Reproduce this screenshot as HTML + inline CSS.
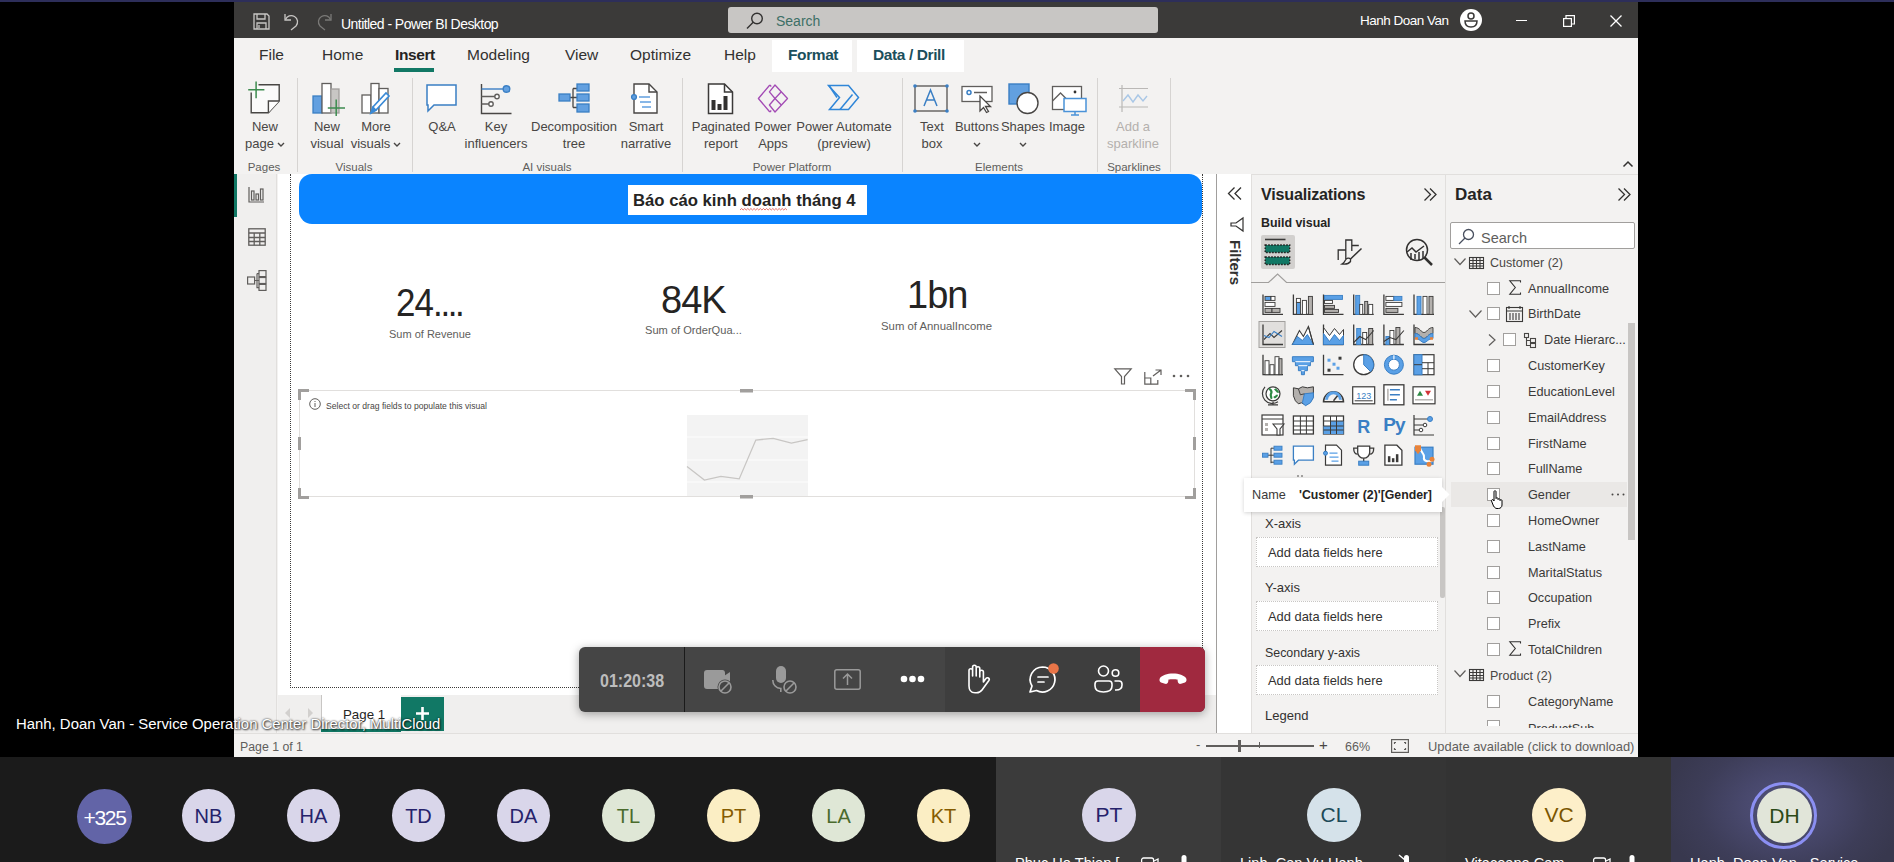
<!DOCTYPE html>
<html><head><meta charset="utf-8">
<style>
*{margin:0;padding:0;box-sizing:border-box}
html,body{width:1894px;height:862px;overflow:hidden;background:#000;font-family:"Liberation Sans",sans-serif}
body{position:relative}
.a{position:absolute}
.t{position:absolute;white-space:nowrap;line-height:1}
svg{position:absolute;overflow:visible}
.tab{position:absolute;top:47px;font-size:15.5px;color:#323130;line-height:1;white-space:nowrap}
.rl{position:absolute;font-size:13px;color:#484644;text-align:center;line-height:17px;white-space:nowrap;top:119px}
.gl{position:absolute;top:162px;font-size:11.5px;color:#605e5c;white-space:nowrap;line-height:1}
.sep{position:absolute;top:78px;width:1px;height:94px;background:#d6d4d2}
</style></head><body>
<!-- top strip -->
<div class="a" style="left:0;top:0;width:1894px;height:2px;background:#2d2e5a"></div>
<!-- window bg -->
<div class="a" style="left:234px;top:2px;width:1404px;height:755px;background:#f3f2f1"></div>
<!-- title bar -->
<div class="a" style="left:234px;top:2px;width:1404px;height:36px;background:#3b3a39"></div>
<div class="a" style="left:728px;top:7px;width:430px;height:26px;background:#c8c6c4;border-radius:3px"></div>
<div class="t" style="left:341px;top:16.5px;font-size:14px;color:#fff;letter-spacing:-0.55px">Untitled - Power BI Desktop</div>
<div class="t" style="left:776px;top:13.5px;font-size:14px;color:#3d6f66">Search</div>
<div class="t" style="left:1360px;top:14px;font-size:13.5px;color:#fff;letter-spacing:-0.5px">Hanh Doan Van</div>

<!-- title icons -->
<svg style="left:253px;top:13px" width="17" height="17" viewBox="0 0 17 17" fill="none" stroke="#c8c6c4" stroke-width="1.3"><path d="M1 1h13l2 2v13H1z"/><path d="M4 1v5h8V1"/><path d="M4 16v-6h9v6"/><path d="M6 12v3"/></svg>
<svg style="left:284px;top:12px" width="16" height="18" viewBox="0 0 16 18" fill="none" stroke="#c8c6c4" stroke-width="1.3"><path d="M1 2v6h6"/><path d="M1.5 7.5C3 4 7 2.5 10.5 4.5c3.5 2 4 6.5 1.5 9.5L7 18"/></svg>
<svg style="left:316px;top:12px" width="16" height="18" viewBox="0 0 16 18" fill="none" stroke="#7a7977" stroke-width="1.3"><path d="M15 2v6H9"/><path d="M14.5 7.5C13 4 9 2.5 5.5 4.5c-3.5 2-4 6.5-1.5 9.5L9 18"/></svg>
<svg style="left:746px;top:12px" width="18" height="17" viewBox="0 0 18 17" fill="none" stroke="#323130" stroke-width="1.4"><circle cx="11" cy="6.5" r="5.3"/><path d="M7.2 10.3L1 16.5"/></svg>
<svg style="left:1460px;top:9px" width="22" height="22" viewBox="0 0 22 22"><circle cx="11" cy="11" r="11" fill="#fff"/><circle cx="11" cy="7" r="3" fill="none" stroke="#3b3a39" stroke-width="1.5"/><path d="M5 12h12c0 4-2.5 6-6 6s-6-2-6-6z" fill="none" stroke="#3b3a39" stroke-width="1.5"/></svg>
<div class="a" style="left:1516px;top:20px;width:11px;height:1.3px;background:#fff"></div>
<svg style="left:1563px;top:15px" width="12" height="12" viewBox="0 0 12 12" fill="none" stroke="#fff" stroke-width="1.2"><rect x="0.6" y="3.6" width="7.8" height="7.8"/><path d="M3 3.6V0.6h8.4V9H8.4"/></svg>
<svg style="left:1610px;top:15px" width="12" height="12" viewBox="0 0 12 12" fill="none" stroke="#fff" stroke-width="1.3"><path d="M0.5 0.5l11 11M11.5 0.5l-11 11"/></svg>
<!-- tabs -->
<div class="tab" style="left:259px">File</div>
<div class="tab" style="left:322px">Home</div>
<div class="tab" style="left:395px;font-weight:bold;color:#252423;letter-spacing:-0.4px">Insert</div>
<div class="a" style="left:394px;top:68px;width:40px;height:4px;background:#117865"></div>
<div class="tab" style="left:467px">Modeling</div>
<div class="tab" style="left:565px">View</div>
<div class="tab" style="left:630px">Optimize</div>
<div class="tab" style="left:724px">Help</div>
<div class="a" style="left:772px;top:40px;width:80px;height:32px;background:#fff"></div>
<div class="a" style="left:857px;top:40px;width:107px;height:32px;background:#fff"></div>
<div class="tab" style="left:788px;font-weight:bold;color:#1b4f5c;letter-spacing:-0.4px">Format</div>
<div class="tab" style="left:873px;font-weight:bold;color:#1b4f5c;letter-spacing:-0.4px">Data / Drill</div>

<!-- ribbon labels -->
<div class="rl" style="left:235px;width:60px;top:118px">New<br>page<svg style="position:relative;display:inline-block;margin-left:3px;vertical-align:1px" width="8" height="5" viewBox="0 0 8 5" fill="none" stroke="#484644" stroke-width="1.4"><path d="M1 1l3 3 3-3"/></svg></div>
<div class="rl" style="left:302px;width:50px;top:118px">New<br>visual</div>
<div class="rl" style="left:348px;width:56px;top:118px">More<br>visuals<svg style="position:relative;display:inline-block;margin-left:3px;vertical-align:1px" width="8" height="5" viewBox="0 0 8 5" fill="none" stroke="#484644" stroke-width="1.4"><path d="M1 1l3 3 3-3"/></svg></div>
<div class="rl" style="left:417px;width:50px;top:118px">Q&amp;A</div>
<div class="rl" style="left:461px;width:70px;top:118px">Key<br>influencers</div>
<div class="rl" style="left:529px;width:90px;top:118px">Decomposition<br>tree</div>
<div class="rl" style="left:616px;width:60px;top:118px">Smart<br>narrative</div>
<div class="rl" style="left:688px;width:66px;top:118px">Paginated<br>report</div>
<div class="rl" style="left:748px;width:50px;top:118px">Power<br>Apps</div>
<div class="rl" style="left:794px;width:100px;top:118px">Power Automate<br>(preview)</div>
<div class="rl" style="left:907px;width:50px;top:118px">Text<br>box</div>
<div class="rl" style="left:952px;width:50px;top:118px">Buttons<br><svg style="position:relative;display:inline-block;vertical-align:1px" width="8" height="5" viewBox="0 0 8 5" fill="none" stroke="#484644" stroke-width="1.4"><path d="M1 1l3 3 3-3"/></svg></div>
<div class="rl" style="left:998px;width:50px;top:118px">Shapes<br><svg style="position:relative;display:inline-block;vertical-align:1px" width="8" height="5" viewBox="0 0 8 5" fill="none" stroke="#484644" stroke-width="1.4"><path d="M1 1l3 3 3-3"/></svg></div>
<div class="rl" style="left:1042px;width:50px;top:118px">Image</div>
<div class="rl" style="left:1103px;width:60px;top:118px;color:#b3b0ad">Add a<br>sparkline</div>
<div class="gl" style="left:264px;transform:translateX(-50%)">Pages</div>
<div class="gl" style="left:354px;transform:translateX(-50%)">Visuals</div>
<div class="gl" style="left:547px;transform:translateX(-50%)">AI visuals</div>
<div class="gl" style="left:792px;transform:translateX(-50%)">Power Platform</div>
<div class="gl" style="left:999px;transform:translateX(-50%)">Elements</div>
<div class="gl" style="left:1134px;transform:translateX(-50%)">Sparklines</div>
<div class="sep" style="left:297px"></div>
<div class="sep" style="left:412px"></div>
<div class="sep" style="left:682px"></div>
<div class="sep" style="left:902px"></div>
<div class="sep" style="left:1097px"></div>
<div class="sep" style="left:1170px"></div>
<svg style="left:1622px;top:160px" width="12" height="8" viewBox="0 0 12 8" fill="none" stroke="#323130" stroke-width="1.5"><path d="M1.5 6.5L6 2l4.5 4.5"/></svg>
<!-- ribbon icons -->
<svg style="left:248px;top:81px" width="34" height="36" viewBox="0 0 34 36" fill="none" stroke-width="1.4"><path d="M10.5 3.8H31.2V20L20.4 31.8H3.2V11.5" fill="#fafafa" stroke="#484644"/><path d="M31.2 20H20.4v11.8" stroke="#484644" fill="#fff"/><path d="M8.1 0.4v16.8M0.2 8.7h16.2" stroke="#3d8b4f" stroke-width="1.5"/></svg>
<svg style="left:312px;top:82px" width="36" height="36" viewBox="0 0 36 36" fill="none" stroke-width="1.3"><rect x="1" y="14" width="9" height="17" fill="#62a0e0" stroke="#3a7fc4"/><rect x="10" y="1.5" width="9" height="29.5" fill="#fff" stroke="#605e5c"/><rect x="19" y="7" width="8" height="24" fill="#c8c6c4" stroke="#a19f9d"/><path d="M24.2 17.6v16.4M15.8 26.1h17.2" stroke="#3d8b4f" stroke-width="1.5"/></svg>
<svg style="left:361px;top:82px" width="34" height="34" viewBox="0 0 34 34" fill="none" stroke-width="1.3"><rect x="1" y="13" width="9" height="18" fill="#fff" stroke="#605e5c"/><rect x="10" y="1.5" width="8" height="29.5" fill="#fff" stroke="#605e5c"/><rect x="18" y="6.5" width="9" height="24.5" fill="#fff" stroke="#605e5c"/><path d="M10 31l2-6L25 11l3 3-13 14z" fill="#fff" stroke="#3a8ad6" stroke-width="1.6"/><path d="M10 31l2-6 3 3z" fill="#3a8ad6" stroke="#3a8ad6"/></svg>
<svg style="left:426px;top:84px" width="32" height="30" viewBox="0 0 32 30" fill="none" stroke="#3a7fc4" stroke-width="1.5"><path d="M1 1h29v20H8l-6 6V21H1z" fill="#fff"/></svg>
<svg style="left:480px;top:83px" width="32" height="32" viewBox="0 0 32 32" fill="none" stroke-width="1.4"><path d="M1.5 1v29.5h30" stroke="#484644"/><path d="M1.5 6h24" stroke="#3a7fc4"/><circle cx="26.5" cy="6" r="3.3" fill="#62a0e0" stroke="#3a7fc4"/><path d="M1.5 13.5h14M1.5 21h10" stroke="#605e5c"/><circle cx="17" cy="13.5" r="2.2" fill="#fff" stroke="#605e5c"/><circle cx="11" cy="21" r="2.2" fill="#fff" stroke="#605e5c"/></svg>
<svg style="left:558px;top:83px" width="32" height="32" viewBox="0 0 32 32" fill="none" stroke-width="1.3"><path d="M12 14.5h3M15 5.5v19M15 5.5h4M15 14.5h4M15 24.5h4" stroke="#484644"/><rect x="1" y="11" width="11" height="7" fill="#62a0e0" stroke="#3a7fc4"/><rect x="19" y="1" width="12" height="7" fill="#62a0e0" stroke="#3a7fc4"/><rect x="19" y="11" width="12" height="7" fill="#62a0e0" stroke="#3a7fc4"/><rect x="19" y="21" width="12" height="8" fill="#62a0e0" stroke="#3a7fc4"/></svg>
<svg style="left:631px;top:83px" width="28" height="32" viewBox="0 0 28 32" fill="none" stroke-width="1.4"><path d="M3 1h15l8 8v21H3z" fill="#fff" stroke="#484644"/><path d="M18 1v8h8" stroke="#484644"/><circle cx="3" cy="14" r="2.4" fill="#62a0e0" stroke="#3a7fc4"/><path d="M8 14h11M9 19h11M11 24h9" stroke="#62a0e0" stroke-width="1.6"/></svg>
<svg style="left:707px;top:83px" width="28" height="32" viewBox="0 0 28 32" fill="none" stroke-width="1.5"><path d="M1.5 1h16l8 8v21.5h-24z" fill="#fff" stroke="#3b3a39"/><path d="M17.5 1v8h8" stroke="#3b3a39"/><rect x="4.5" y="17" width="4" height="10" fill="#323130" stroke="none"/><rect x="10.5" y="21" width="4" height="6" fill="#323130" stroke="none"/><rect x="16.5" y="13" width="4" height="14" fill="#323130" stroke="none"/></svg>
<svg style="left:756px;top:84px" width="34" height="30" viewBox="0 0 34 30" fill="none" stroke="#a34bb5" stroke-width="1.3" stroke-linejoin="round"><path d="M13.8 1L2.4 14.5 13.8 28"/><path d="M19 1l12.5 13.5L19 28l-5.6-7 5.6-6.5-5.6-6.7z"/><path d="M19 14.5l6.3-6.7M19 14.5l6.3 6.5"/><path d="M13.8 1l1.5 1.5M13.8 28l1.5-1.5"/></svg>
<svg style="left:827px;top:84px" width="34" height="28" viewBox="0 0 34 28" fill="none" stroke="#2f86d8" stroke-width="1.5"><path d="M1.5 1.5h20l10 12-10 12h-19l10-12z"/><path d="M13 25.5l12.5-15"/><path d="M2 1.5l8 12"/></svg>
<svg style="left:913px;top:84px" width="36" height="30" viewBox="0 0 36 30" fill="none"><rect x="2" y="2" width="32" height="25" stroke="#605e5c" stroke-width="1.4"/><circle cx="2" cy="2" r="1.8" fill="#3a7fc4"/><circle cx="34" cy="2" r="1.8" fill="#3a7fc4"/><circle cx="2" cy="27" r="1.8" fill="#3a7fc4"/><circle cx="34" cy="27" r="1.8" fill="#3a7fc4"/><path d="M11 22L17.5 6 24 22M13.5 16h8" stroke="#3a7fc4" stroke-width="1.5"/></svg>
<svg style="left:961px;top:85px" width="32" height="28" viewBox="0 0 32 28" fill="none" stroke-width="1.3"><rect x="1" y="1.5" width="30" height="15" fill="#fff" stroke="#605e5c"/><circle cx="8" cy="7.5" r="2" stroke="#3a7fc4" stroke-width="1.5"/><path d="M13 7.5h13" stroke="#605e5c" stroke-width="1.5"/><path d="M19 11v15l3.5-3.5 3 5 2-1-3-5h5z" fill="#fff" stroke="#484644"/></svg>
<svg style="left:1008px;top:83px" width="32" height="32" viewBox="0 0 32 32" fill="none" stroke-width="1.4"><rect x="1" y="1" width="20" height="20" fill="#62a0e0" stroke="#3a7fc4"/><circle cx="19.5" cy="20" r="10.5" fill="#fff" stroke="#484644"/></svg>
<svg style="left:1051px;top:85px" width="36" height="32" viewBox="0 0 36 32" fill="none" stroke-width="1.3"><rect x="1.5" y="1.5" width="29" height="23" fill="#fff" stroke="#605e5c"/><path d="M1.5 16l8-8 7 7" stroke="#605e5c"/><circle cx="24" cy="7" r="1.4" fill="#323130"/><rect x="13" y="13.5" width="22" height="13" fill="#fff" stroke="#4a92d8" stroke-width="1.5"/><path d="M24 26.5v3M20 30h8" stroke="#4a92d8" stroke-width="1.5"/></svg>
<svg style="left:1118px;top:85px" width="32" height="28" viewBox="0 0 32 28" fill="none" stroke-width="1.2"><path d="M4 0v27M1 3.5h29M1 22h29" stroke="#bab8b6"/><path d="M5 16l5-6 5 7 5-7 5 6 4-5" stroke="#a9c7e6" stroke-width="1.4"/></svg>

<!-- left nav -->
<div class="a" style="left:234px;top:174px;width:43px;height:559px;background:#f0efee;border-right:1px solid #e1dfdd"></div>
<div class="a" style="left:234px;top:174px;width:3px;height:43px;background:#117865"></div>
<svg style="left:248px;top:186px" width="17" height="17" viewBox="0 0 17 17" fill="none" stroke="#605e5c" stroke-width="1.2"><path d="M1 1v15h15"/><rect x="3.5" y="5" width="2.5" height="9"/><rect x="8" y="8" width="2.5" height="6"/><rect x="12.5" y="3" width="2.5" height="11"/></svg>
<svg style="left:248px;top:228px" width="18" height="18" viewBox="0 0 18 18" fill="none" stroke="#605e5c" stroke-width="1.3"><rect x="0.8" y="0.8" width="16.4" height="16.4"/><path d="M0.8 5h16.4M0.8 9.5h16.4M0.8 13.5h16.4M6.2 5v12.2M11.8 5v12.2"/></svg>
<svg style="left:247px;top:270px" width="20" height="21" viewBox="0 0 20 21" fill="none" stroke="#605e5c" stroke-width="1.2"><rect x="0.6" y="7" width="7" height="7"/><rect x="12" y="0.6" width="7" height="6"/><rect x="12" y="7.5" width="7" height="6"/><rect x="12" y="14.4" width="7" height="6"/><path d="M7.6 10.5H10M10 3.6v14h2M10 3.6h2M10 10.5h2"/></svg>
<!-- canvas -->
<div class="a" style="left:278px;top:174px;width:938px;height:521px;background:#fff"></div>
<div class="a" style="left:290px;top:174px;width:913px;height:514px;border-left:1px dotted #3b3a39;border-right:1px dotted #3b3a39;border-bottom:1px dotted #3b3a39"></div>
<div class="a" style="left:299px;top:174px;width:903px;height:50px;background:#0a84ff;border-radius:0 0 13px 13px;border-top-left-radius:13px;border-top-right-radius:13px"></div>
<div class="a" style="left:628px;top:185px;width:239px;height:30px;background:#fff"></div>
<div class="t" style="left:633px;top:193.3px;font-size:16.7px;font-weight:bold;color:#252423">Báo cáo kinh doanh tháng 4</div>
<svg style="left:740px;top:208px" width="49" height="3" viewBox="0 0 47 3" preserveAspectRatio="none" fill="none" stroke="#e0524a" stroke-width="0.8"><path d="M0 2l1.5-1.5 1.5 1.5 1.5-1.5 1.5 1.5 1.5-1.5 1.5 1.5 1.5-1.5 1.5 1.5 1.5-1.5 1.5 1.5 1.5-1.5 1.5 1.5 1.5-1.5 1.5 1.5 1.5-1.5 1.5 1.5 1.5-1.5 1.5 1.5 1.5-1.5 1.5 1.5 1.5-1.5 1.5 1.5 1.5-1.5 1.5 1.5 1.5-1.5 1.5 1.5 1.5-1.5 1.5 1.5 1.5-1.5 1.5 1.5"/></svg>
<!-- cards -->
<div class="t" style="left:396px;top:284px;font-size:38px;color:#252423;letter-spacing:-1px;transform-origin:0 0;transform:scaleX(0.92)">24<span style="letter-spacing:-2.6px">....</span></div>
<div class="t" style="left:389px;top:329px;font-size:11px;color:#605e5c">Sum of Revenue</div>
<div class="t" style="left:661px;top:281px;font-size:38px;color:#252423;letter-spacing:-1px">84K</div>
<div class="t" style="left:645px;top:325px;font-size:11.1px;color:#605e5c">Sum of OrderQua...</div>
<div class="t" style="left:907px;top:275.5px;font-size:38px;color:#252423;letter-spacing:-1px">1bn</div>
<div class="t" style="left:881px;top:321px;font-size:11.35px;color:#605e5c">Sum of AnnualIncome</div>
<!-- visual placeholder -->
<div class="a" style="left:299px;top:390px;width:896px;height:107px;border:1.5px solid #e1dfdd"></div>
<div class="a" style="left:687px;top:415px;width:121px;height:81px;background:#f3f3f3"></div>
<svg style="left:687px;top:415px" width="121" height="81" viewBox="0 0 121 81" fill="none"><path d="M0 22h121M0 45h121M0 67h121" stroke="#fafafa" stroke-width="1.5"/><path d="M0 51.5L17.4 65.1 33.9 61.3 52.2 63.9 68.8 25.1 86.2 23.3 104.4 28.2 120.6 24.7" stroke="#c8c6c4" stroke-width="1.3"/></svg>
<svg style="left:298px;top:389px" width="898" height="110" viewBox="0 0 898 110" fill="#a19f9d"><path d="M0 0h11v3H3v8H0z"/><path d="M898 0h-11v3h8v8h3z"/><path d="M0 110h11v-3H3v-8H0z"/><path d="M898 110h-11v-3h8v-8h3z"/><rect x="0" y="48" width="3" height="13"/><rect x="895" y="48" width="3" height="13"/><rect x="442" y="0" width="13" height="3.5"/><rect x="442" y="106" width="13" height="3.5"/></svg>
<svg style="left:309px;top:398px" width="12" height="12" viewBox="0 0 12 12" fill="none" stroke="#605e5c" stroke-width="1"><circle cx="6" cy="6" r="5.3"/><path d="M6 5v4M6 3v1"/></svg>
<div class="t" style="left:326px;top:401.7px;font-size:8.6px;color:#484644">Select or drag fields to populate this visual</div>
<svg style="left:1114px;top:368px" width="18" height="17" viewBox="0 0 18 17" fill="none" stroke="#605e5c" stroke-width="1.2"><path d="M0.8 0.8h16.4L10.5 8.5v7.5h-3V8.5z"/></svg>
<svg style="left:1144px;top:369px" width="18" height="16" viewBox="0 0 18 16" fill="none" stroke="#605e5c" stroke-width="1.2"><path d="M0.8 3v12.2h13V11"/><path d="M0.8 9h6v6.2"/><path d="M9 7l8-6M11.5 1h5.5v5"/></svg>
<svg style="left:1172px;top:374px" width="18" height="4" viewBox="0 0 18 4" fill="#605e5c"><circle cx="2" cy="2" r="1.3"/><circle cx="9" cy="2" r="1.3"/><circle cx="16" cy="2" r="1.3"/></svg>
<!-- page tabs -->
<div class="a" style="left:278px;top:695px;width:938px;height:38px;background:#f0efee"></div>
<svg style="left:284px;top:707px" width="30" height="12" viewBox="0 0 30 12" fill="#d2d0ce"><path d="M6 1L1 6l5 5z"/><path d="M24 1l5 5-5 5z"/></svg>
<div class="a" style="left:321px;top:695px;width:80px;height:37px;background:#fff;border-left:1px solid #c8c6c4"></div>
<div class="a" style="left:321px;top:729px;width:80px;height:3px;background:#117865"></div>
<div class="t" style="left:343px;top:708px;font-size:13.3px;color:#252423">Page 1</div>
<div class="a" style="left:401px;top:697px;width:43px;height:34px;background:#117865"></div>
<svg style="left:416px;top:707px" width="13" height="13" viewBox="0 0 13 13" fill="none" stroke="#fff" stroke-width="2.6"><path d="M6.5 0v13M0 6.5h13"/></svg>
<!-- status bar -->
<div class="a" style="left:234px;top:733px;width:1404px;height:1px;background:#e1dfdd"></div>
<div class="t" style="left:240px;top:741px;font-size:12.3px;color:#605e5c">Page 1 of 1</div>
<div class="t" style="left:1196px;top:738px;font-size:13px;color:#605e5c">-</div>
<div class="a" style="left:1206px;top:745px;width:108px;height:1.6px;background:#605e5c"></div>
<div class="a" style="left:1238px;top:740px;width:3.4px;height:12px;background:#605e5c"></div>
<div class="a" style="left:1259px;top:742px;width:1px;height:6px;background:#605e5c"></div>
<div class="t" style="left:1319px;top:737px;font-size:15px;color:#484644">+</div>
<div class="t" style="left:1345px;top:740.5px;font-size:12.5px;color:#605e5c">66%</div>
<svg style="left:1391px;top:739px" width="18" height="14" viewBox="0 0 18 14" fill="none" stroke="#605e5c" stroke-width="1.2"><rect x="0.6" y="0.6" width="16.8" height="12.8"/><path d="M3.5 5V3.5H5M13 3.5h1.5V5M14.5 9v1.5H13M5 10.5H3.5V9"/></svg>
<div class="t" style="left:1428px;top:740.5px;font-size:12.9px;color:#605e5c">Update available (click to download)</div>

<!-- filters pane -->
<div class="a" style="left:1216px;top:174px;width:35px;height:559px;background:#fff;border-left:1px solid #a19f9d"></div>
<svg style="left:1228px;top:187px" width="14" height="13" viewBox="0 0 14 13" fill="none" stroke="#323130" stroke-width="1.3"><path d="M6.5 0.5l-6 6 6 6M13 0.5l-6 6 6 6"/></svg>
<svg style="left:1230px;top:217px" width="14" height="15" viewBox="0 0 14 15" fill="none" stroke="#323130" stroke-width="1.2"><path d="M13 1v13L6 9H1V6h5z" transform="rotate(0)"/></svg>
<div class="t" style="left:1229px;top:240px;font-size:15px;font-weight:bold;color:#323130;transform-origin:0 0;transform:translate(14px,0) rotate(90deg)">Filters</div>
<!-- visualizations pane -->
<div class="a" style="left:1251px;top:174px;width:194px;height:559px;background:#f3f2f1;border-left:1px solid #e1dfdd;border-top:1px solid #e1dfdd"></div>
<div class="a" style="left:1445px;top:174px;width:193px;height:559px;background:#f3f2f1;border-left:1px solid #e1dfdd;border-top:1px solid #e1dfdd"></div>
<div class="t" style="left:1261px;top:186px;font-size:16.1px;font-weight:bold;color:#252423;letter-spacing:-0.2px">Visualizations</div>
<svg style="left:1424px;top:188px" width="13" height="13" viewBox="0 0 13 13" fill="none" stroke="#323130" stroke-width="1.3"><path d="M0.5 0.5l6 6-6 6M6 0.5l6 6-6 6"/></svg>
<div class="t" style="left:1261px;top:217px;font-size:12.4px;font-weight:bold;color:#252423">Build visual</div>
<div class="a" style="left:1261px;top:235px;width:34px;height:34px;background:#d2d0ce;border-radius:2px"></div>
<svg style="left:1264px;top:238px" width="28" height="28" viewBox="0 0 28 28" fill="none"><path d="M1 1.5h20.5" stroke="#3b3a39" stroke-width="1.6"/><rect x="1.2" y="7" width="24.5" height="7.5" fill="#117865" stroke="#201f1e" stroke-width="1.4" stroke-dasharray="1.6 1.4"/><rect x="1.2" y="19" width="24.5" height="7.5" fill="#117865" stroke="#201f1e" stroke-width="1.4" stroke-dasharray="1.6 1.4"/></svg>
<svg style="left:1337px;top:238px" width="28" height="28" viewBox="0 0 28 28" fill="none" stroke="#323130" stroke-width="1.3"><path d="M1.2 22V12H8.8M8.8 21V2h6v11M14.8 7.5h7"/><path d="M24.5 10.5L13.5 21" stroke-width="1.5"/><path d="M13.5 21c-1.5-1.5-4-1-5 1-0.8 1.8-1.5 3-3.5 4 3.5 0.5 7-0.5 8.5-2.5z" fill="#f3f2f1"/></svg>
<svg style="left:1405px;top:238px" width="30" height="30" viewBox="0 0 30 30" fill="none" stroke="#323130" stroke-width="1.5"><circle cx="12" cy="12" r="10.5"/><path d="M19.5 19.5l7.5 7.5" stroke-width="2.5"/><path d="M2 14l5-4 4 4 8-6"/><path d="M6 15v7M10 16v5M14 14v8M18 13v7"/></svg>
<svg style="left:1251px;top:273px" width="194" height="11" viewBox="0 0 194 11" fill="none" stroke="#a19f9d" stroke-width="1.2"><path d="M0 9.5H17.5L26.6 1 35.5 9.5H194"/></svg>
<svg style="left:1251px;top:282px" width="194" height="200" viewBox="0 0 194 200"><g transform="translate(11.0,12.4)"><path d="M1 0v20h20" stroke="#3b3a39" stroke-width="1.3" fill="none"/><rect x="3" y="2" width="6" height="4" fill="#5aa0e6" stroke="#3b3a39" stroke-width="0.9"/><rect x="9" y="2" width="4" height="4" fill="#fff" stroke="#3b3a39" stroke-width="0.9"/><rect x="3" y="8" width="10" height="4" fill="#fff" stroke="#3b3a39" stroke-width="0.9"/><rect x="3" y="14" width="7" height="4" fill="#b3b0ad" stroke="#3b3a39" stroke-width="0.9"/><rect x="10" y="14" width="8" height="4" fill="#b3b0ad" stroke="#3b3a39" stroke-width="0.9"/></g><g transform="translate(41.4,12.4)"><path d="M1 0v20h20" stroke="#3b3a39" stroke-width="1.3" fill="none"/><rect x="4" y="8" width="4" height="12" fill="#5aa0e6" stroke="#3b3a39" stroke-width="0.9"/><rect x="4" y="4" width="4" height="4" fill="#fff" stroke="#3b3a39" stroke-width="0.9"/><rect x="10" y="6" width="4" height="14" fill="#fff" stroke="#3b3a39" stroke-width="0.9"/><rect x="16" y="2" width="4" height="18" fill="#b3b0ad" stroke="#3b3a39" stroke-width="0.9"/></g><g transform="translate(71.5,12.4)"><path d="M1 0v20h20" stroke="#3b3a39" stroke-width="1.3" fill="none"/><rect x="2" y="1" width="18" height="4" fill="#5aa0e6" stroke="#3a7fc4" stroke-width="0.9"/><rect x="2" y="6" width="8" height="3" fill="#fff" stroke="#3b3a39" stroke-width="0.9"/><rect x="2" y="11" width="10" height="3" fill="#b3b0ad" stroke="#3b3a39" stroke-width="0.9"/><rect x="2" y="15" width="14" height="3" fill="#b3b0ad" stroke="#3b3a39" stroke-width="0.9"/></g><g transform="translate(101.7,12.4)"><path d="M1 0v20h20" stroke="#3b3a39" stroke-width="1.3" fill="none"/><rect x="3" y="1" width="4" height="19" fill="#5aa0e6" stroke="#3a7fc4" stroke-width="0.9"/><rect x="7" y="10" width="3" height="10" fill="#fff" stroke="#3b3a39" stroke-width="0.9"/><rect x="12" y="7" width="3" height="13" fill="#b3b0ad" stroke="#3b3a39" stroke-width="0.9"/><rect x="16" y="10" width="4" height="10" fill="#fff" stroke="#3b3a39" stroke-width="0.9"/></g><g transform="translate(131.9,12.4)"><path d="M1 0v20h20" stroke="#3b3a39" stroke-width="1.3" fill="none"/><rect x="3" y="2" width="8" height="4" fill="#fff" stroke="#3b3a39" stroke-width="0.9"/><rect x="11" y="2" width="8" height="4" fill="#5aa0e6" stroke="#3a7fc4" stroke-width="0.9"/><rect x="3" y="8" width="16" height="4" fill="#fff" stroke="#3b3a39" stroke-width="0.9"/><rect x="3" y="14" width="12" height="4" fill="#b3b0ad" stroke="#3b3a39" stroke-width="0.9"/></g><g transform="translate(162.0,12.4)"><path d="M1 0v20h20" stroke="#3b3a39" stroke-width="1.3" fill="none"/><rect x="4" y="2" width="4" height="18" fill="#5aa0e6" stroke="#3a7fc4" stroke-width="0.9"/><rect x="10" y="2" width="4" height="18" fill="#fff" stroke="#3b3a39" stroke-width="0.9"/><rect x="16" y="2" width="4" height="18" fill="#b3b0ad" stroke="#3b3a39" stroke-width="0.9"/></g><g transform="translate(11.0,42.5)"><rect x="-3" y="-3" width="26" height="26" fill="#e1dfdd" stroke="#a19f9d" stroke-width="1"/><path d="M1 0v20h20" stroke="#3b3a39" stroke-width="1.3" fill="none"/><path d="M2 15l6-6 4 4 8-7" stroke="#3b3a39" stroke-width="1.1" fill="none"/><path d="M2 11l5 2 5-6 8 5" stroke="#3a7fc4" stroke-width="1.1" fill="none"/></g><g transform="translate(41.4,42.5)"><path d="M0 20L7 6l4 6 5-10 5 18z" fill="#fff" stroke="#3b3a39" stroke-width="1.1"/><path d="M0 20l5-8 5 4 5-6 6 10z" fill="#5aa0e6" stroke="#3a7fc4" stroke-width="1"/><path d="M16 2l5 18" stroke="#3b3a39" fill="#b3b0ad"/></g><g transform="translate(71.5,42.5)"><path d="M1 0v20h20" stroke="#3b3a39" stroke-width="1.3" fill="none"/><path d="M1 3l6 8 5-7 5 6 4-5v15H1z" fill="#fff" stroke="#3b3a39" stroke-width="1"/><path d="M1 9l6 8 5-7 5 6 4-5v9H1z" fill="#5aa0e6" stroke="#3a7fc4" stroke-width="1"/></g><g transform="translate(101.7,42.5)"><path d="M1 0v20h20" stroke="#3b3a39" stroke-width="1.3" fill="none"/><rect x="4" y="4" width="4" height="16" fill="#5aa0e6" stroke="#3a7fc4" stroke-width="0.9"/><rect x="10" y="8" width="4" height="12" fill="#fff" stroke="#3b3a39" stroke-width="0.9"/><rect x="16" y="4" width="4" height="16" fill="#b3b0ad" stroke="#3b3a39" stroke-width="0.9"/><path d="M1 18l6-6 6 3 8-9" stroke="#3b3a39" stroke-width="1.1" fill="none"/></g><g transform="translate(131.9,42.5)"><path d="M1 0v20h20" stroke="#3b3a39" stroke-width="1.3" fill="none"/><rect x="3" y="12" width="4" height="8" fill="#5aa0e6" stroke="#3a7fc4" stroke-width="0.9"/><rect x="7" y="6" width="4" height="14" fill="#fff" stroke="#3b3a39" stroke-width="0.9"/><rect x="13" y="3" width="4" height="17" fill="#b3b0ad" stroke="#3b3a39" stroke-width="0.9"/><path d="M1 17l6-4 6 2 8-9" stroke="#3b3a39" stroke-width="1.1" fill="none"/></g><g transform="translate(162.0,42.5)"><path d="M1 0v20h20" stroke="#3b3a39" stroke-width="1.3" fill="none"/><path d="M2 3c5 0 6 5 9 5s4-5 9-5v6c-5 0-6 5-9 5s-4-5-9-5z" fill="#b3b0ad" stroke="#3b3a39" stroke-width="0.9"/><path d="M2 9c5 0 6 5 9 5s4-5 9-5v5c-5 0-6 4-9 4s-4-4-9-4z" fill="#5aa0e6" stroke="#3a7fc4" stroke-width="1"/><path d="M2 14h3M17 14h3" stroke="#e8833a" stroke-width="2.5"/></g><g transform="translate(11.0,72.7)"><path d="M1 0v20h20" stroke="#3b3a39" stroke-width="1.3" fill="none"/><rect x="3" y="6" width="4" height="14" fill="#fff" stroke="#3b3a39" stroke-width="0.9"/><rect x="8" y="10" width="4" height="10" fill="#fff" stroke="#3b3a39" stroke-width="0.9"/><rect x="13" y="2" width="4" height="18" fill="#fff" stroke="#3b3a39" stroke-width="0.9"/><rect x="17" y="4" width="3" height="16" fill="#b3b0ad" stroke="#3b3a39" stroke-width="0.9"/></g><g transform="translate(41.4,72.7)"><path d="M0 2h21v5h-3v4h-3v5h-3v4H9v-4H6v-5H3V7H0z" fill="#5aa0e6" stroke="#3a7fc4" stroke-width="1"/><path d="M3 7h15M6 11h9M9 16h3" stroke="#fff" stroke-width="1"/></g><g transform="translate(71.5,72.7)"><path d="M1 0v20h20" stroke="#3b3a39" stroke-width="1.3" fill="none"/><rect x="5" y="4" width="3" height="3" fill="#5aa0e6"/><rect x="10" y="8" width="3" height="3" fill="#5aa0e6"/><rect x="16" y="2" width="3" height="3" fill="#3b3a39"/><rect x="5" y="14" width="3" height="3" fill="#3b3a39"/><rect x="14" y="12" width="3" height="3" fill="#5aa0e6"/></g><g transform="translate(101.7,72.7)"><circle cx="11" cy="10" r="10" fill="#fff" stroke="#3b3a39" stroke-width="1.3"/><path d="M11 10V0a10 10 0 0 1 7 17z" fill="#5aa0e6" stroke="#3a7fc4" stroke-width="1"/></g><g transform="translate(131.9,72.7)"><circle cx="11" cy="10" r="7.5" fill="none" stroke="#5aa0e6" stroke-width="4"/><circle cx="11" cy="10" r="9.5" fill="none" stroke="#3a7fc4" stroke-width="1"/><circle cx="11" cy="10" r="5.5" fill="#fff" stroke="#3a7fc4" stroke-width="1"/><path d="M11 0.5v4" stroke="#fff" stroke-width="1.2"/></g><g transform="translate(162.0,72.7)"><rect x="1" y="0" width="20" height="20" fill="#fff" stroke="#3b3a39" stroke-width="1.2"/><rect x="1" y="0" width="8" height="20" fill="#5aa0e6" stroke="#3a7fc4" stroke-width="1"/><path d="M9 8h12M15 8v12M9 14h12M1 10h8" stroke="#3b3a39" stroke-width="1"/></g><g transform="translate(11.0,102.8)"><circle cx="11" cy="9" r="7" fill="#fff" stroke="#3b3a39" stroke-width="1.2"/><path d="M7 4c2 1 3 3 2 5s1 3 0 5M13 4c1 2 3 2 3 4M12 13c1-1 3-1 3-3" stroke="#2d8a44" stroke-width="2.2" fill="none"/><path d="M3 2a10 10 0 0 0 13 15M11 17v3M6 20h10" stroke="#3b3a39" stroke-width="1.2" fill="none"/></g><g transform="translate(41.4,102.8)"><path d="M1 3l5 1 4-2 5 1 6-1v10l-3 5-5 3-4-2-3 1-3-3-2-5z" fill="#b3b0ad" stroke="#3b3a39" stroke-width="1"/><path d="M12 9l9-1v5l-3 5-5 3-3-3z" fill="#5aa0e6" stroke="#3a7fc4" stroke-width="1"/><path d="M6 4l2 6 4-1" stroke="#3b3a39" fill="none" stroke-width="0.9"/></g><g transform="translate(71.5,102.8)"><path d="M1 17a10 10 0 0 1 20 0z" fill="none" stroke="#3b3a39" stroke-width="1.5"/><path d="M4 15a7 7 0 0 1 14 0" fill="none" stroke="#5aa0e6" stroke-width="3"/><path d="M11 16l4-5" stroke="#3b3a39" stroke-width="1.5"/></g><g transform="translate(101.7,102.8)"><rect x="0" y="2" width="22" height="17" fill="#fff" stroke="#3b3a39" stroke-width="1.2"/><text x="11" y="14" font-size="9" text-anchor="middle" fill="#3a7fc4" font-family="Liberation Sans">123</text><path d="M2 16h18" stroke="#3b3a39" stroke-width="1"/></g><g transform="translate(131.9,102.8)"><rect x="1" y="0" width="20" height="20" fill="#fff" stroke="#3b3a39" stroke-width="1.3"/><path d="M5 4v12" stroke="#b3b0ad" stroke-width="1.5"/><path d="M7 5h10M7 10h10M7 15h7" stroke="#3a7fc4" stroke-width="1.6"/></g><g transform="translate(162.0,102.8)"><rect x="0" y="2" width="22" height="17" fill="#fff" stroke="#3b3a39" stroke-width="1.2"/><path d="M4 11l3-5 3 5z" fill="#2d8a44"/><path d="M12 6h6l-3 5z" fill="#d13438"/><path d="M2 15h18" stroke="#b3b0ad" stroke-width="1.4"/></g><g transform="translate(11.0,133.0)"><rect x="0" y="0" width="21" height="20" fill="#fff" stroke="#3b3a39" stroke-width="1.2"/><path d="M0 4h21" stroke="#3b3a39"/><rect x="3" y="8" width="3" height="3" fill="#b3b0ad"/><rect x="3" y="13" width="3" height="3" fill="#b3b0ad"/><path d="M11 9h11l-4 5v6h-3v-6z" fill="#fff" stroke="#3b3a39" stroke-width="1.1"/></g><g transform="translate(41.4,133.0)"><rect x="1" y="1" width="20" height="18" fill="#fff" stroke="#3b3a39" stroke-width="1.3"/><path d="M1 6h20M1 11h20M1 15h20M8 1v18M14 1v18" stroke="#3b3a39" stroke-width="1"/></g><g transform="translate(71.5,133.0)"><rect x="1" y="1" width="20" height="18" fill="#fff" stroke="#3b3a39" stroke-width="1.3"/><rect x="8" y="6" width="13" height="13" fill="#5aa0e6"/><rect x="1" y="11" width="7" height="8" fill="#5aa0e6"/><path d="M1 6h20M1 11h20M1 15h20M8 1v18M14 1v18" stroke="#3b3a39" stroke-width="1"/></g><g transform="translate(101.7,133.0)"><text x="11" y="18" font-size="18" font-weight="bold" text-anchor="middle" fill="#3a7fc4" font-family="Liberation Sans">R</text></g><g transform="translate(131.9,133.0)"><text x="11" y="16" font-size="19" font-weight="bold" text-anchor="middle" fill="#3a7fc4" font-family="Liberation Sans" letter-spacing="-1">Py</text></g><g transform="translate(162.0,133.0)"><path d="M1 0v20h20" stroke="#3b3a39" stroke-width="1.2" fill="none"/><path d="M1 4h15M1 10h9M1 15h6" stroke="#3b3a39" stroke-width="1"/><circle cx="17" cy="4" r="2.5" fill="#5aa0e6" stroke="#3a7fc4"/><circle cx="12" cy="10" r="1.8" fill="#fff" stroke="#3b3a39"/><circle cx="8" cy="15" r="1.8" fill="#fff" stroke="#3b3a39"/></g><g transform="translate(11.0,163.2)"><path d="M6 10h3M9 3v15M9 3h3M9 10h3M9 17h3" stroke="#3b3a39" stroke-width="1" fill="none"/><rect x="0.5" y="8" width="5.5" height="4" fill="#5aa0e6" stroke="#3a7fc4" stroke-width="0.9"/><rect x="12" y="1" width="8" height="4" fill="#5aa0e6" stroke="#3a7fc4" stroke-width="0.9"/><rect x="12" y="8" width="8" height="4" fill="#5aa0e6" stroke="#3a7fc4" stroke-width="0.9"/><rect x="12" y="15" width="8" height="4" fill="#5aa0e6" stroke="#3a7fc4" stroke-width="0.9"/></g><g transform="translate(41.4,163.2)"><path d="M1 1h20v14H6l-4 4v-4H1z" fill="#fff" stroke="#3a7fc4" stroke-width="1.3"/></g><g transform="translate(71.5,163.2)"><path d="M3 0h11l5 5v15H3z" fill="#fff" stroke="#3b3a39" stroke-width="1.2"/><circle cx="3" cy="8" r="2" fill="#5aa0e6" stroke="#3a7fc4"/><path d="M7 8h8M7 12h9M9 16h7" stroke="#5aa0e6" stroke-width="1.3"/></g><g transform="translate(101.7,163.2)"><path d="M5 1h12v6a6 6 0 0 1-12 0z" fill="#fff" stroke="#3b3a39" stroke-width="1.3"/><path d="M5 3H1c0 4 2 6 4 6M17 3h4c0 4-2 6-4 6M11 13v4" stroke="#3b3a39" stroke-width="1.3" fill="none"/><rect x="6" y="16" width="10" height="4" fill="#5aa0e6" stroke="#3a7fc4"/></g><g transform="translate(131.9,163.2)"><path d="M2 0h12l5 5v15H2z" fill="#fff" stroke="#3b3a39" stroke-width="1.3"/><rect x="5" y="11" width="2.5" height="6" fill="#3b3a39"/><rect x="9" y="13" width="2.5" height="4" fill="#3b3a39"/><rect x="13" y="9" width="2.5" height="8" fill="#3b3a39"/></g><g transform="translate(162.0,163.2)"><rect x="2" y="2" width="18" height="17" fill="#5aa0e6" stroke="#3a7fc4" stroke-width="1.2"/><path d="M7 2c0 5 5 6 4 10s4 5 9 3" stroke="#fff" stroke-width="2" fill="none"/><path d="M2 0h6v5l-3 4-3-4z" fill="#e8833a"/><circle cx="19" cy="14" r="2.5" fill="#e8833a"/><circle cx="16" cy="19" r="2.5" fill="#e8833a"/></g></svg>
<!-- viz lower -->
<svg style="left:1296px;top:474px" width="12" height="4" viewBox="0 0 12 4" fill="#8a8886"><circle cx="2" cy="2" r="1"/><circle cx="6" cy="2" r="1"/></svg>
<div class="a" style="left:1440px;top:507px;width:5px;height:91px;background:#c8c6c4;border-radius:2px"></div>
<div class="t" style="left:1265px;top:517px;font-size:13px;color:#323130">X-axis</div>
<div class="a" style="left:1256px;top:537px;width:182px;height:30px;background:#fff;border:1px dotted #c8c6c4"></div>
<div class="t" style="left:1268px;top:547px;font-size:12.9px;color:#323130">Add data fields here</div>
<div class="t" style="left:1265px;top:581px;font-size:13px;color:#323130">Y-axis</div>
<div class="a" style="left:1256px;top:601px;width:182px;height:30px;background:#fff;border:1px dotted #c8c6c4"></div>
<div class="t" style="left:1268px;top:611px;font-size:12.9px;color:#323130">Add data fields here</div>
<div class="t" style="left:1265px;top:646.5px;font-size:12.4px;color:#323130">Secondary y-axis</div>
<div class="a" style="left:1256px;top:665px;width:182px;height:30px;background:#fff;border:1px dotted #c8c6c4"></div>
<div class="t" style="left:1268px;top:675px;font-size:12.9px;color:#323130">Add data fields here</div>
<div class="t" style="left:1265px;top:709px;font-size:13px;color:#323130">Legend</div>
<!-- data pane -->
<div class="t" style="left:1455px;top:186px;font-size:17px;font-weight:bold;color:#252423">Data</div>
<svg style="left:1618px;top:188px" width="13" height="13" viewBox="0 0 13 13" fill="none" stroke="#323130" stroke-width="1.3"><path d="M0.5 0.5l6 6-6 6M6 0.5l6 6-6 6"/></svg>
<div class="a" style="left:1450px;top:222px;width:185px;height:27px;background:#fff;border:1px solid #a19f9d;border-radius:2px"></div>
<svg style="left:1458px;top:228px" width="17" height="17" viewBox="0 0 17 17" fill="none" stroke="#484f5e" stroke-width="1.3"><circle cx="10.5" cy="6.5" r="5"/><path d="M7 10l-6 6"/></svg>
<div class="t" style="left:1481px;top:230.5px;font-size:14.5px;color:#605e5c">Search</div>
<div class="a" style="left:1628px;top:323px;width:7px;height:217px;background:#c8c6c4"></div>
<div class="a" style="left:1451px;top:482px;width:176px;height:25px;background:#eae8e6"></div>
<svg style="left:1454px;top:257.8px" width="12" height="8" viewBox="0 0 12 8" fill="none" stroke="#605e5c" stroke-width="1.2"><path d="M0.5 0.5l5.5 6 5.5-6"/></svg><svg style="left:1469px;top:256.8px" width="15" height="12" viewBox="0 0 15 12" fill="none" stroke="#3b3a39" stroke-width="1.1"><rect x="0.5" y="0.5" width="14" height="11"/><path d="M0.5 3.5h14M0.5 6.5h14M0.5 9h14M4 0.5v11M7.5 0.5v11M11 0.5v11"/></svg><div class="t" style="left:1490px;top:257.3px;font-size:12.5px;color:#484644">Customer (2)</div><div class="a" style="left:1487px;top:281.5px;width:13px;height:13px;border:1px solid #a19f9d;background:#fff"></div><svg style="left:1509px;top:279.5px" width="12" height="15" viewBox="0 0 12 15" fill="none" stroke="#323130" stroke-width="1.1" stroke-linejoin="miter"><path d="M11.5 2.5V0.8H0.8L6.3 7.5 0.8 14.2h10.7v-1.7"/></svg><div class="t" style="left:1528px;top:282.5px;font-size:12.7px;color:#3b3a39">AnnualIncome</div><svg style="left:1469px;top:309.5px" width="13" height="8" viewBox="0 0 13 8" fill="none" stroke="#605e5c" stroke-width="1.2"><path d="M0.5 0.5l6 6.5 6-6.5"/></svg><div class="a" style="left:1487px;top:307.0px;width:13px;height:13px;border:1px solid #a19f9d;background:#fff"></div><svg style="left:1506px;top:305.5px" width="17" height="16" viewBox="0 0 17 16" fill="none" stroke="#3b3a39" stroke-width="1.1"><rect x="0.5" y="1.5" width="16" height="14"/><path d="M0.5 5h16M3 0v3M14 0v3M4 7v7M7 7v7M10 7v7M13 7v7"/></svg><div class="t" style="left:1528px;top:308.0px;font-size:12.7px;color:#3b3a39">BirthDate</div><svg style="left:1488px;top:333.5px" width="8" height="12" viewBox="0 0 8 12" fill="none" stroke="#605e5c" stroke-width="1.2"><path d="M1 0.5l6 5.5-6 5.5"/></svg><div class="a" style="left:1503px;top:333.0px;width:13px;height:13px;border:1px solid #a19f9d;background:#fff"></div><svg style="left:1524px;top:332.5px" width="12" height="15" viewBox="0 0 12 15" fill="none" stroke="#484644" stroke-width="1.1"><rect x="0.5" y="0.5" width="4" height="4"/><rect x="6.5" y="5.5" width="5" height="4"/><rect x="6.5" y="10.5" width="5" height="4"/><path d="M2.5 4.5v8h4M2.5 7.5h4"/></svg><div class="t" style="left:1544px;top:334.0px;font-size:12.7px;color:#3b3a39">Date Hierarc...</div><div class="a" style="left:1487px;top:359.0px;width:13px;height:13px;border:1px solid #a19f9d;background:#fff"></div><div class="t" style="left:1528px;top:360.0px;font-size:12.7px;color:#3b3a39">CustomerKey</div><div class="a" style="left:1487px;top:384.8px;width:13px;height:13px;border:1px solid #a19f9d;background:#fff"></div><div class="t" style="left:1528px;top:385.8px;font-size:12.7px;color:#3b3a39">EducationLevel</div><div class="a" style="left:1487px;top:410.5px;width:13px;height:13px;border:1px solid #a19f9d;background:#fff"></div><div class="t" style="left:1528px;top:411.5px;font-size:12.7px;color:#3b3a39">EmailAddress</div><div class="a" style="left:1487px;top:436.5px;width:13px;height:13px;border:1px solid #a19f9d;background:#fff"></div><div class="t" style="left:1528px;top:437.5px;font-size:12.7px;color:#3b3a39">FirstName</div><div class="a" style="left:1487px;top:462.2px;width:13px;height:13px;border:1px solid #a19f9d;background:#fff"></div><div class="t" style="left:1528px;top:463.2px;font-size:12.7px;color:#3b3a39">FullName</div><div class="a" style="left:1487px;top:488.0px;width:13px;height:13px;border:1px solid #a19f9d;background:#fff"></div><div class="t" style="left:1528px;top:489.0px;font-size:12.7px;color:#3b3a39">Gender</div><div class="a" style="left:1487px;top:513.8px;width:13px;height:13px;border:1px solid #a19f9d;background:#fff"></div><div class="t" style="left:1528px;top:514.8px;font-size:12.7px;color:#3b3a39">HomeOwner</div><div class="a" style="left:1487px;top:539.5px;width:13px;height:13px;border:1px solid #a19f9d;background:#fff"></div><div class="t" style="left:1528px;top:540.5px;font-size:12.7px;color:#3b3a39">LastName</div><div class="a" style="left:1487px;top:565.5px;width:13px;height:13px;border:1px solid #a19f9d;background:#fff"></div><div class="t" style="left:1528px;top:566.5px;font-size:12.7px;color:#3b3a39">MaritalStatus</div><div class="a" style="left:1487px;top:591.2px;width:13px;height:13px;border:1px solid #a19f9d;background:#fff"></div><div class="t" style="left:1528px;top:592.2px;font-size:12.7px;color:#3b3a39">Occupation</div><div class="a" style="left:1487px;top:617.0px;width:13px;height:13px;border:1px solid #a19f9d;background:#fff"></div><div class="t" style="left:1528px;top:618.0px;font-size:12.7px;color:#3b3a39">Prefix</div><div class="a" style="left:1487px;top:642.8px;width:13px;height:13px;border:1px solid #a19f9d;background:#fff"></div><svg style="left:1509px;top:640.8px" width="12" height="15" viewBox="0 0 12 15" fill="none" stroke="#323130" stroke-width="1.1" stroke-linejoin="miter"><path d="M11.5 2.5V0.8H0.8L6.3 7.5 0.8 14.2h10.7v-1.7"/></svg><div class="t" style="left:1528px;top:643.8px;font-size:12.7px;color:#3b3a39">TotalChildren</div><svg style="left:1454px;top:670.0px" width="12" height="8" viewBox="0 0 12 8" fill="none" stroke="#605e5c" stroke-width="1.2"><path d="M0.5 0.5l5.5 6 5.5-6"/></svg><svg style="left:1469px;top:669.0px" width="15" height="12" viewBox="0 0 15 12" fill="none" stroke="#3b3a39" stroke-width="1.1"><rect x="0.5" y="0.5" width="14" height="11"/><path d="M0.5 3.5h14M0.5 6.5h14M0.5 9h14M4 0.5v11M7.5 0.5v11M11 0.5v11"/></svg><div class="t" style="left:1490px;top:669.5px;font-size:12.5px;color:#484644">Product (2)</div><div class="a" style="left:1487px;top:694.5px;width:13px;height:13px;border:1px solid #a19f9d;background:#fff"></div><div class="t" style="left:1528px;top:695.5px;font-size:12.7px;color:#3b3a39">CategoryName</div><div class="a" style="left:1487px;top:720px;width:13px;height:6px;border:1px solid #a19f9d;border-bottom:none;background:#fff"></div><div class="a" style="left:1528px;top:722.5px;width:70px;height:5px;overflow:hidden"><div class="t" style="left:0;top:0;font-size:12.7px;color:#3b3a39">ProductSub</div></div><svg style="left:1611px;top:493px" width="14" height="3" viewBox="0 0 14 3" fill="#484644"><circle cx="1.5" cy="1.5" r="1"/><circle cx="7" cy="1.5" r="1"/><circle cx="12.5" cy="1.5" r="1"/></svg><svg style="left:1491px;top:490px" width="13" height="19" viewBox="0 0 13 19"><path d="M3 1.5c0-1 2-1 2 0v7c0-1 2-1 2 0v1c0-1 2-1 2 0v1c0-1 2-1 2 0V15c0 2-1.5 3.5-3.5 3.5H6c-1.5 0-2.5-1-3.5-2.5L0.5 11c-0.5-1 1-2 2-1L3 11z" fill="#fff" stroke="#000" stroke-width="1"/></svg>
<!-- tooltip -->
<div class="a" style="left:1244px;top:478px;width:198px;height:34px;background:#fff;box-shadow:0 1px 4px rgba(0,0,0,0.18)"></div>
<svg style="left:1441px;top:486px" width="9" height="17" viewBox="0 0 9 17" fill="#fff"><path d="M0 0l8.5 8.5L0 17z"/></svg>
<div class="t" style="left:1252px;top:489px;font-size:12.7px;color:#3b3a39">Name</div>
<div class="t" style="left:1299px;top:489px;font-size:12.3px;font-weight:bold;color:#252423">'Customer (2)'[Gender]</div>

<!-- teams bottom bar -->
<div class="a" style="left:0;top:757px;width:1894px;height:105px;background:#1b1b1b"></div>
<div class="a" style="left:996px;top:757px;width:225px;height:105px;background:#3b3b3b"></div>
<div class="a" style="left:1221px;top:757px;width:225px;height:105px;background:#353535"></div>
<div class="a" style="left:1446px;top:757px;width:225px;height:105px;background:#333333"></div>
<div class="a" style="left:1671px;top:757px;width:223px;height:105px;background:radial-gradient(ellipse 120px 90px at 113px 50px,#52527c 0%,#48486c 35%,#3d3d58 70%,#38384e 100%)"></div>
<style>
.av{position:absolute;border-radius:50%;text-align:center;font-family:"Liberation Sans",sans-serif;white-space:nowrap}
.nm{position:absolute;top:856px;font-size:14.6px;color:#fff;white-space:nowrap;line-height:1}
</style>
<div class="av" style="left:77px;top:789px;width:55px;height:55px;background:#6264a7;color:#fff;font-size:21px;line-height:58px;letter-spacing:-1.3px">+325</div>
<div class="av" style="left:182px;top:789px;width:53px;height:53px;background:#d9d6ea;color:#25226b;font-size:20px;line-height:55px">NB</div>
<div class="av" style="left:287px;top:789px;width:53px;height:53px;background:#d9d6ea;color:#25226b;font-size:20px;line-height:55px">HA</div>
<div class="av" style="left:392px;top:789px;width:53px;height:53px;background:#d9d6ea;color:#25226b;font-size:20px;line-height:55px">TD</div>
<div class="av" style="left:497px;top:789px;width:53px;height:53px;background:#d9d6ea;color:#25226b;font-size:20px;line-height:55px">DA</div>
<div class="av" style="left:602px;top:789px;width:53px;height:53px;background:#dfe7d6;color:#4a6b2c;font-size:20px;line-height:55px">TL</div>
<div class="av" style="left:707px;top:789px;width:53px;height:53px;background:#fbeec4;color:#855c00;font-size:20px;line-height:55px">PT</div>
<div class="av" style="left:812px;top:789px;width:53px;height:53px;background:#dfe7d6;color:#4a6b2c;font-size:20px;line-height:55px">LA</div>
<div class="av" style="left:917px;top:789px;width:53px;height:53px;background:#fbeec4;color:#855c00;font-size:20px;line-height:55px">KT</div>
<div class="av" style="left:1082px;top:788px;width:54px;height:54px;background:#d9d6ea;color:#25226b;font-size:21px;line-height:54px">PT</div>
<div class="av" style="left:1307px;top:788px;width:54px;height:54px;background:#d5e2ea;color:#1d4a58;font-size:21px;line-height:54px">CL</div>
<div class="av" style="left:1532px;top:788px;width:54px;height:54px;background:#fdefc9;color:#7a5500;font-size:21px;line-height:54px">VC</div>
<div class="av" style="left:1750px;top:782px;width:67px;height:67px;border:3px solid #8b8ff2;background:transparent"></div>
<div class="av" style="left:1757px;top:788px;width:55px;height:55px;background:#e1e5d9;color:#2b4a17;font-size:21px;line-height:55px">DH</div>
<div class="nm" style="left:1015px">Phuc Ho Thien [...</div>
<div class="nm" style="left:1240px">Linh, Can Vu Hanh</div>
<div class="nm" style="left:1465px">Vitaceane Cam...</div>
<div class="nm" style="left:1690px">Hanh, Doan Van - Service</div>
<svg style="left:1141px;top:857px" width="18" height="8" viewBox="0 0 18 8" fill="none" stroke="#fff" stroke-width="1.3"><rect x="0.6" y="1" width="12" height="8" rx="2"/><path d="M13 4l4-2v7"/></svg>
<svg style="left:1180px;top:855px" width="8" height="8" viewBox="0 0 8 8" fill="#fff"><rect x="1.5" y="0" width="5" height="9" rx="2.5"/></svg>
<svg style="left:1398px;top:854px" width="14" height="9" viewBox="0 0 14 9" fill="none" stroke="#fff" stroke-width="1.4"><path d="M1 1l12 10"/><rect x="6" y="1" width="5" height="9" rx="2.5" fill="#fff" stroke="none"/></svg>
<svg style="left:1593px;top:857px" width="18" height="8" viewBox="0 0 18 8" fill="none" stroke="#fff" stroke-width="1.3"><rect x="0.6" y="1" width="12" height="8" rx="2"/><path d="M13 4l4-2v7"/></svg>
<svg style="left:1628px;top:855px" width="8" height="8" viewBox="0 0 8 8" fill="#fff"><rect x="1.5" y="0" width="5" height="9" rx="2.5"/></svg>
<!-- presenter label -->
<div class="t" style="left:16px;top:717px;font-size:14.9px;color:#fff;text-shadow:0 0 2px rgba(0,0,0,0.9),1px 1px 2px rgba(0,0,0,0.7)">Hanh, Doan Van - Service Operation Center Director, MultiCloud</div>
<!-- meeting controls -->
<div class="a" style="left:579px;top:647px;width:626px;height:65px;border-radius:6px;background:#454545;box-shadow:0 2px 10px rgba(0,0,0,0.35);overflow:hidden">
  <div class="a" style="left:105px;top:0;width:1px;height:65px;background:#1a1a1a"></div>
  <div class="a" style="left:366px;top:0;width:195px;height:65px;background:#3e3e3e"></div>
  <div class="a" style="left:561px;top:0;width:65px;height:65px;background:#a0293f"></div>
</div>
<div class="t" style="left:600px;top:673px;font-size:17.6px;font-weight:bold;color:#bdbdbd;transform-origin:0 0;transform:scaleX(0.91)">01:20:38</div>
<svg style="left:704px;top:666px" width="30" height="30" viewBox="0 0 30 30"><path d="M3 4h14a3 3 0 0 1 3 3v3l6-4v14l-4-2.5" fill="#9a9a9a"/><rect x="0" y="4" width="21" height="19" rx="3" fill="#9a9a9a"/><circle cx="21" cy="21" r="7.5" fill="#454545"/><circle cx="21" cy="21" r="6" fill="none" stroke="#9a9a9a" stroke-width="1.6"/><path d="M17 25l8-8" stroke="#9a9a9a" stroke-width="1.6"/></svg>
<svg style="left:772px;top:666px" width="28" height="30" viewBox="0 0 28 30"><rect x="4" y="0" width="10" height="17" rx="5" fill="#9a9a9a"/><path d="M0.8 14c0 5 3.5 8 8 8.5V26" fill="none" stroke="#9a9a9a" stroke-width="1.6"/><circle cx="18" cy="21" r="7.5" fill="#454545"/><circle cx="18" cy="21" r="6" fill="none" stroke="#9a9a9a" stroke-width="1.6"/><path d="M14 25l8-8" stroke="#9a9a9a" stroke-width="1.6"/></svg>
<svg style="left:834px;top:669px" width="27" height="21" viewBox="0 0 27 21" fill="none" stroke="#9a9a9a" stroke-width="1.5"><rect x="0.8" y="0.8" width="25.4" height="19.4" rx="2"/><path d="M13.5 16V5M9 9.5l4.5-4.5 4.5 4.5"/></svg>
<svg style="left:900px;top:675px" width="26" height="8" viewBox="0 0 26 8" fill="#fff"><circle cx="4" cy="4" r="3.3"/><circle cx="12.5" cy="4" r="3.3"/><circle cx="21" cy="4" r="3.3"/></svg>
<svg style="left:964px;top:664px" width="25" height="30" viewBox="0 0 25 30" fill="none" stroke="#fff" stroke-width="1.6" stroke-linejoin="round"><path d="M5 14V6.5a1.8 1.8 0 0 1 3.6 0V12V3a1.8 1.8 0 0 1 3.6 0v9V4.5a1.8 1.8 0 0 1 3.6 0V13V8a1.8 1.8 0 0 1 3.6 0v10l2.5-3.5a1.8 1.8 0 0 1 3 2L18 26c-1.5 2-3 2.8-5.5 2.8h-1.5C6.5 28.8 5 25 5 22V14z"/></svg>
<svg style="left:1029px;top:662px" width="32" height="33" viewBox="0 0 32 33" fill="none"><path d="M13.5 5a12.5 12.5 0 1 1-6 23.5L1 30l2-6A12.5 12.5 0 0 1 13.5 5z" stroke="#fff" stroke-width="1.7" stroke-linejoin="round"/><path d="M9 15h10M9 20h6" stroke="#fff" stroke-width="1.7" stroke-linecap="round"/><circle cx="24.5" cy="6.5" r="5.3" fill="#e97548"/></svg>
<svg style="left:1094px;top:665px" width="29" height="28" viewBox="0 0 29 28" fill="none" stroke="#fff" stroke-width="1.6"><circle cx="9.5" cy="6" r="5"/><circle cx="21.5" cy="8" r="3.3"/><path d="M1 19a3 3 0 0 1 3-3h11a3 3 0 0 1 3 3v2c0 4-3 6-8.5 6S1 25 1 21z"/><path d="M20.5 16h4.5a3 3 0 0 1 3 3v1c0 3-2 5-6 5h-1"/></svg>
<svg style="left:1158px;top:672px" width="30" height="15" viewBox="0 0 30 15"><path d="M15 1.5c6 0 11 2 13 4.5 1 1.5 0.5 4-1 4.5l-4 1.3c-1.5 0.5-3-0.5-3.2-2l-0.3-2.3C17.5 7 12.5 7 10.5 7.5l-0.3 2.3c-0.2 1.5-1.7 2.5-3.2 2L3 10.5C1.5 10 1 7.5 2 6 4 3.5 9 1.5 15 1.5z" fill="#fff"/></svg>

</body></html>
